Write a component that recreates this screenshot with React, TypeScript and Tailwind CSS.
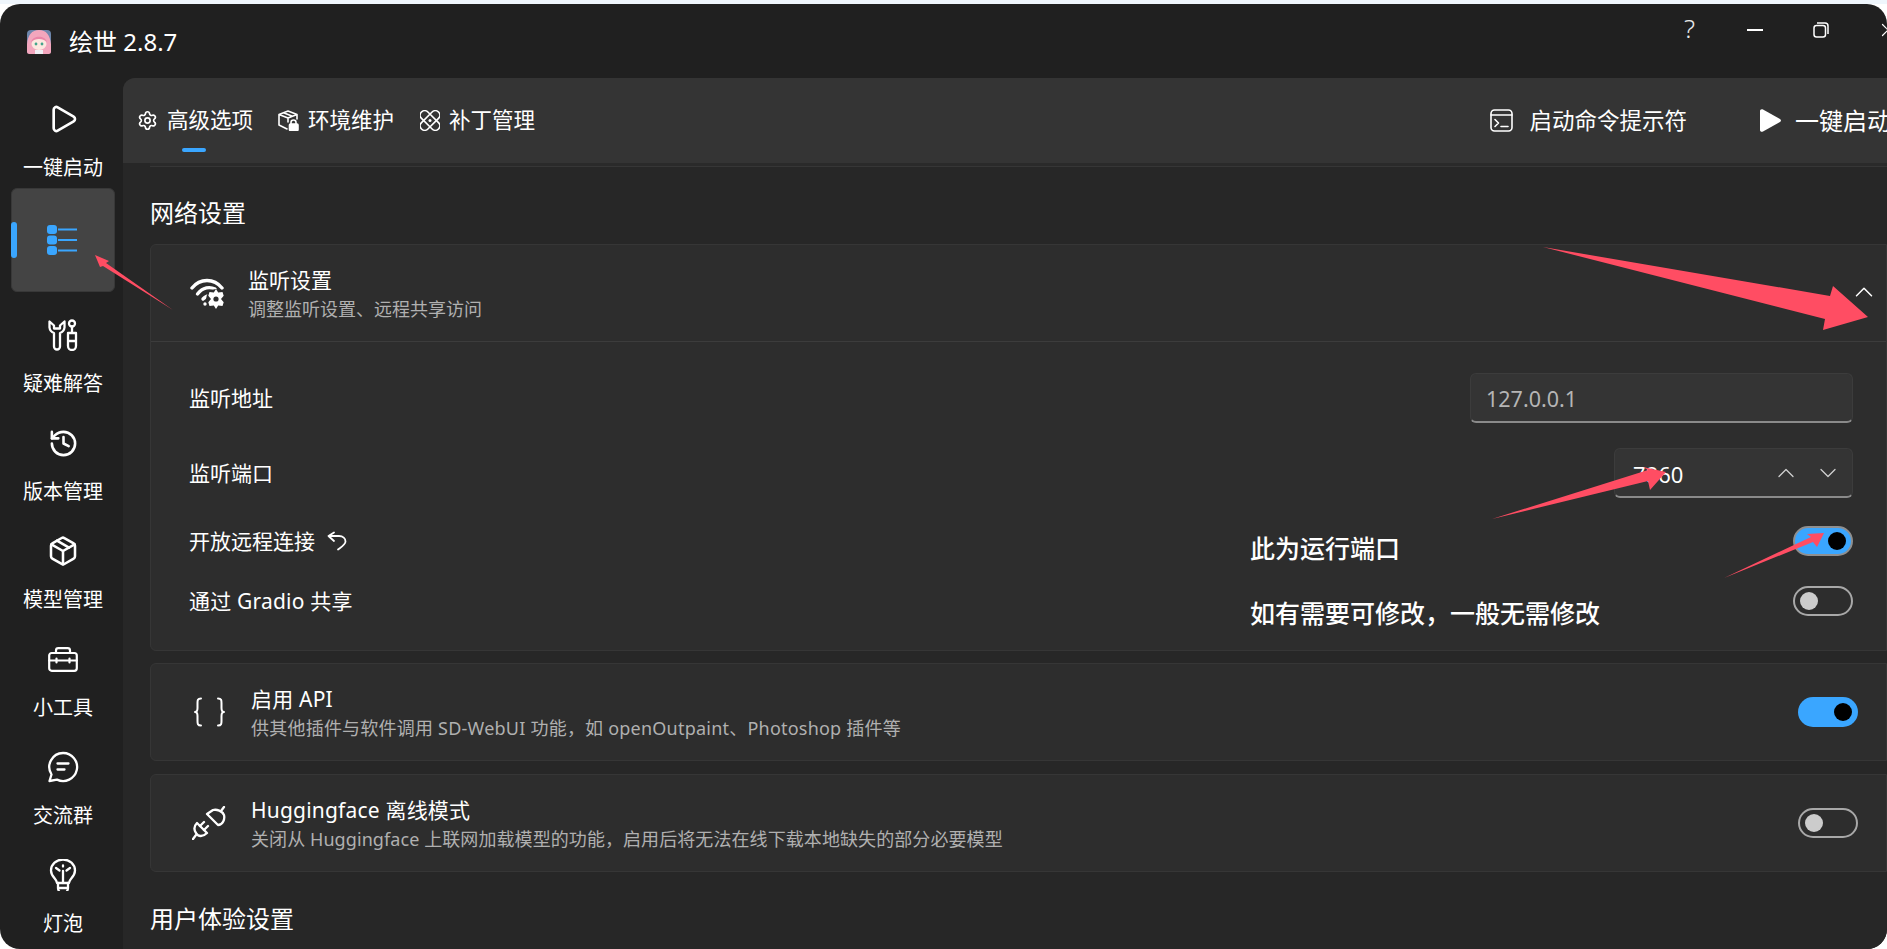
import React from "react";
import { Play, History, Package, Settings, ChevronUp, ChevronDown, X } from "lucide-react";

const Wrench = () => (
  <svg width="30" height="32" viewBox="0 0 30 32" fill="none" stroke="white" strokeWidth="2.3" strokeLinejoin="round" strokeLinecap="round">
    <path d="M1.500 2.500 v6 a6.500 6.500 0 0 0 4.500 5.500 v13.500 a3 3 0 0 0 6 0 V14 a6.500 6.500 0 0 0 4.500 -5.500 v-6 l-4.500 4 v3 h-6 v-3 z" />
    <circle cx="24" cy="4.500" r="3" />
    <path d="M24 7.500 V14 M20 14 h8 v13 a4 4 0 0 1 -8 0 z M20 22 h8" />
  </svg>
);

const ListIcon = () => (
  <svg width="30" height="30" viewBox="0 0 30 30" fill="#3aa6ff">
    <rect x="0" y="0" width="10" height="9" rx="3" />
    <rect x="0" y="10.500" width="10" height="9" rx="3" />
    <rect x="0" y="21" width="10" height="9" rx="3" />
    <rect x="11" y="3.500" width="19" height="2" />
    <rect x="11" y="14" width="19" height="2" />
    <rect x="11" y="24.500" width="19" height="2" />
  </svg>
);

const Bulb = () => (
  <svg width="30" height="32" viewBox="0 0 30 32" fill="none" stroke="white" strokeWidth="2.3" strokeLinejoin="round" strokeLinecap="round">
    <path d="M9 24 c0 -4 -6 -6 -6 -12.500 a12 11 0 0 1 24 0 c0 6.500 -6 8.500 -6 12.500 z" />
    <path d="M10 29 a5 5 0 0 0 10 0 z M10 24 v5 M20 24 v5" />
    <path d="M15 24 V12 M15 6.500 v1 M8 9 l3.500 2.500 M22 9 l-3.500 2.500" />
  </svg>
);

const ChatIcon = () => (
  <svg width="32" height="32" viewBox="0 0 32 32" fill="none" stroke="white" strokeWidth="2.3" strokeLinejoin="round" strokeLinecap="round">
    <path d="M16 2 a14 14 0 1 1 -6 26.600 L2.500 30 L4.500 23.500 A14 14 0 0 1 16 2 z" />
    <path d="M10.500 12.500 h11 M10.500 18.500 h7" />
  </svg>
);

const Toolbox = () => (
  <svg width="30" height="25" viewBox="0 0 30 25" fill="none" stroke="white" strokeWidth="2.200" strokeLinejoin="round" strokeLinecap="round">
    <rect x="1.200" y="6" width="27.600" height="17.800" rx="2.500" />
    <path d="M8 6 V3.500 a2.300 2.300 0 0 1 2.300 -2.300 h9.400 a2.300 2.300 0 0 1 2.300 2.300 V6" />
    <path d="M1.200 13.500 H28.800 M8.500 11.500 v4 M21.500 11.500 v4" />
  </svg>
);

const BoxLock = () => (
  <svg width="21" height="21" viewBox="0 0 21 21" fill="none" stroke="white" strokeWidth="1.6" strokeLinejoin="round" strokeLinecap="round">
    <path d="M10 1 L1 4.500 V15 L9 19 M10 1 L19 4.500 V9 M1 4.500 L10 8 L19 4.500 M10 8 V12 M5.500 2.800 L14.500 6.200" />
    <path d="M13 14 v-1.500 a2.500 2.500 0 0 1 5 0 V14" />
    <rect x="11.500" y="14" width="8.500" height="6.500" rx="1" fill="white" />
  </svg>
);

const Patch = () => (
  <svg width="20" height="21" viewBox="0 0 20 20" fill="none" stroke="white" strokeWidth="1.6">
    <rect x="5.500" y="-2" width="9" height="24" rx="4.500" transform="rotate(45 10 10)" />
    <rect x="5.500" y="-2" width="9" height="24" rx="4.500" transform="rotate(-45 10 10)" />
    <circle cx="10" cy="10" r="1.500" fill="white" stroke="none" />
  </svg>
);

const WifiGear = () => (
  <svg width="36" height="32" viewBox="0 0 36 32" fill="none" stroke="white" strokeWidth="3.400" strokeLinecap="round">
    <path d="M2 11 C10 1 24 1 32 11" />
    <path d="M7.500 17 C13 10 20 9.500 25 12" />
    <path d="M13 22 C15 20 16 19 18 19" />
    <circle cx="15" cy="27" r="1.700" fill="white" stroke="none" />
    <circle cx="26" cy="22" r="10" fill="#2d2d2d" stroke="none" />
    <path d="M26 12 l2.200 3.500 4.300 -.5 1.200 3.800 -2.700 3.200 2.700 3.200 -1.200 3.800 -4.300 -.5 -2.200 3.500 -2.200 -3.500 -4.300 .5 -1.200 -3.800 2.700 -3.200 -2.700 -3.200 1.200 -3.800 4.300 .5 z" fill="white" stroke="none" />
    <circle cx="26" cy="22" r="2.600" fill="#2d2d2d" stroke="none" />
  </svg>
);

const PlugIcon = () => (
  <svg width="34" height="34" viewBox="0 0 34 34" fill="none" stroke="white" strokeWidth="2.300" strokeLinecap="round" strokeLinejoin="round">
    <path d="M5 17 L15 27 C11 31 6 31 4 27 C2 24 2 20 5 17 z" />
    <path d="M4 29 L1 33 M8 20 L12 16 M12 24 L16 20" />
    <path d="M15 8 L26 19 C31 19 33 13 32 9 C30 5 25 3 21 4 z" />
    <path d="M29 5 L32 1" />
  </svg>
);

const BracesIcon = () => (
  <svg width="31" height="30" viewBox="0 0 31 30" fill="none" stroke="white" strokeWidth="2" strokeLinecap="round" strokeLinejoin="round">
    <path d="M7 1.500 C3.500 1.500 3.500 3.500 3.500 6 V11 C3.500 13 2.500 15 1 15 C2.500 15 3.500 17 3.500 19 V24 C3.500 26.500 3.500 28.500 7 28.500" />
    <path d="M24 1.500 C27.500 1.500 27.500 3.500 27.500 6 V11 C27.500 13 28.500 15 30 15 C28.500 15 27.500 17 27.500 19 V24 C27.500 26.500 27.500 28.500 24 28.500" />
  </svg>
);

const ReturnIcon = () => (
  <svg width="20" height="20" viewBox="0 0 20 20" fill="none" stroke="white" strokeWidth="1.800" strokeLinecap="round" strokeLinejoin="round">
    <path d="M7 1.500 L1.500 5 L7 10 M1.500 5 H12 C16 5 18.500 7.500 18.500 10.500 C18.500 13.500 15 15.500 11 18.500" />
  </svg>
);

const Toggle = ({ on, ring }: { on?: boolean; ring?: boolean }) =>
  on ? (
    <div className={`flex h-[30px] w-[60px] items-center justify-end rounded-full bg-[#3aa6ff] ${ring ? "border-2 border-[#8f8f8f] pr-[5px]" : "pr-[6px]"}`}>
      <div className="h-[18px] w-[18px] rounded-full bg-black" />
    </div>
  ) : (
    <div className="flex h-[30px] w-[60px] items-center rounded-full border-2 border-[#a8a8a8] pl-[5px]">
      <div className="h-[18px] w-[18px] rounded-full bg-[#cccccc]" />
    </div>
  );

const NavItem = ({ icon, label }: { icon: React.ReactNode; label: string }) => (
  <div className="flex h-[104px] w-[104px] flex-col items-center pt-[23px]">
    <div className="flex h-[32px] items-center justify-center">{icon}</div>
    <div className="mt-[19px] text-[20px] leading-[28px] text-white">{label}</div>
  </div>
);

const Tab = ({ icon, label, active }: { icon: React.ReactNode; label: string; active?: boolean }) => (
  <div className="relative flex h-full w-[117px] items-center gap-[9px]">
    <div className="flex w-[21px] justify-center">{icon}</div>
    <div className="mb-[2px] text-[21.500px] leading-[28px] text-white">{label}</div>
    {active && <div className="absolute bottom-[11px] left-[45px] h-[4px] w-[24px] rounded-full bg-[#3aa6ff]" />}
  </div>
);

const SettingCard = ({ icon, title, sub, subClass, on }: { icon: React.ReactNode; title: string; sub: string; subClass: string; on?: boolean }) => (
  <div className="flex h-[98px] items-center rounded-l-[6px] border border-[#363636] bg-[#2d2d2d] pr-[28px]">
    <div className="flex w-[100px] justify-center pl-[16px]">{icon}</div>
    <div className="flex-1">
      <div className="text-[21px] leading-[28px] tracking-[0.2px] text-white">{title}</div>
      <div className={`mt-[3px] text-[18px] leading-[24px] text-[#b0b0b0] ${subClass}`}>{sub}</div>
    </div>
    <Toggle on={on} />
  </div>
);

export default function App() {
  return (
    <div className="relative h-[949px] w-[1887px] overflow-hidden bg-white font-['Noto_Sans','Noto_Sans_CJK_SC',sans-serif]">
      <div className="h-[4px] bg-[#eff6fc]" />
      <div className="flex h-[945px] flex-col overflow-hidden rounded-[20px] bg-[#202020]">
        <div className="flex h-[74px] items-start">
          <div className="mt-[22px] flex items-start">
            <svg className="ml-[27px] mt-[4px]" width="24" height="24" viewBox="0 0 24 24">
              <rect width="24" height="24" rx="4" fill="#6d86ab" />
              <path d="M0 22 C-1 8 3 0 12 0 C21 0 25 8 24 22 C24 24 22 24 20 24 H4 C2 24 0 24 0 22 Z" fill="#f2a6bd" />
              <ellipse cx="12" cy="14" rx="7.500" ry="6" fill="#fde6df" />
              <path d="M4 12 C6 5 18 5 20 12 C16 8 8 8 4 12 Z" fill="#ea86a8" />
              <circle cx="9" cy="14" r="1.400" fill="#44a58c" />
              <circle cx="15" cy="14" r="1.400" fill="#44a58c" />
              <rect x="8" y="20" width="8" height="4" fill="#f0f0f5" />
            </svg>
            <div className="ml-[18px] text-[24px] leading-[32px] text-white">绘世 2.8.7</div>
          </div>
          <div className="ml-auto mt-[6px] flex items-center">
            <div className="mb-[4px] text-[26px] font-light leading-[36px] text-[#e8e8e8]">?</div>
            <div className="ml-[52px] h-[2px] w-[16px] bg-white" />
            <svg className="ml-[50px]" width="16" height="16" viewBox="0 0 16 16" fill="none" stroke="white" strokeWidth="1.500">
              <rect x="1" y="3.500" width="11.500" height="11.500" rx="2.500" />
              <path d="M4 1 H12 a3 3 0 0 1 3 3 V12" />
            </svg>
            <X className="ml-[48px] mr-[-12px]" size={22} strokeWidth={1.3} color="white" />
          </div>
        </div>
        <div className="flex min-h-0 flex-1">
          <div className="flex w-[123px] shrink-0 flex-col gap-[4px] pl-[11px] pt-[2px]">
            <NavItem icon={<Play size={32} strokeWidth={2} color="white" />} label="一键启动" />
            <div className="relative flex h-[104px] w-[104px] items-center justify-center rounded-[6px] border border-[#383838] bg-[#444444] pr-[2px]">
              <div className="absolute left-[-1px] top-[33px] h-[36px] w-[6px] rounded-full bg-[#3aa6ff]" />
              <ListIcon />
            </div>
            <NavItem icon={<Wrench />} label="疑难解答" />
            <NavItem icon={<History size={31} strokeWidth={2} color="white" />} label="版本管理" />
            <NavItem icon={<Package size={32} strokeWidth={1.9} color="white" />} label="模型管理" />
            <NavItem icon={<Toolbox />} label="小工具" />
            <NavItem icon={<ChatIcon />} label="交流群" />
            <NavItem icon={<Bulb />} label="灯泡" />
          </div>
          <div className="min-w-0 flex-1 overflow-hidden rounded-tl-[12px] bg-[#272727]">
            <div className="flex h-[85px] items-center bg-[#343434] pl-[14px]">
              <Tab active icon={<Settings size={23} strokeWidth={1.9} color="white" />} label="高级选项" />
              <div className="w-[24px]" />
              <Tab icon={<BoxLock />} label="环境维护" />
              <div className="w-[24px]" />
              <Tab icon={<Patch />} label="补丁管理" />
              <div className="ml-auto flex items-center">
                <svg width="23" height="23" viewBox="0 0 23 23" fill="none" stroke="white" strokeWidth="1.600" strokeLinecap="round" strokeLinejoin="round">
                  <rect x="1" y="1" width="21" height="21" rx="3.500" />
                  <path d="M1 6 H22 M5 10.500 L8.500 14 L5 17.500 M11 17.500 H18" />
                </svg>
                <div className="ml-[16px] text-[22.500px] leading-[30px] text-white">启动命令提示符</div>
                <svg className="ml-[73px]" width="21" height="23" viewBox="0 0 21 23" fill="white">
                  <path d="M0 2 C0 .5 1.500 -.3 3 .5 L20 10 C21.300 10.800 21.300 12.200 20 13 L3 22.500 C1.500 23.300 0 22.500 0 21 Z" />
                </svg>
                <div className="ml-[14px] mr-[-4px] text-[24px] leading-[30px] text-white">一键启动</div>
              </div>
            </div>
            <div className="ml-[27px] h-[4px] border-b border-[#363636] bg-[#2a2a2a]" />
            <div className="pl-[27px]">
              <div className="mt-[31px] text-[24px] leading-[30px] text-white">网络设置</div>
              <div className="mt-[16px] h-[407px] rounded-l-[6px] border border-[#363636] bg-[#2d2d2d]">
                <div className="flex h-[97px] items-center border-b border-[#3c3c3c] pr-[7px]">
                  <div className="ml-[39px] flex w-[36px] justify-center"><WifiGear /></div>
                  <div className="ml-[22px] flex-1">
                    <div className="text-[21px] leading-[28px] text-white">监听设置</div>
                    <div className="mt-[3px] text-[18px] leading-[24px] text-[#b0b0b0]">调整监听设置、远程共享访问</div>
                  </div>
                  <ChevronUp size={30} strokeWidth={1.2} color="white" className="mb-[2px]" />
                </div>
                <div className="pl-[38px] pr-[33px] pt-[31px]">
                  <div className="flex h-[50px] items-center justify-between">
                    <div className="text-[21px] leading-[28px] text-white">监听地址</div>
                    <div className="flex h-[50px] w-[383px] items-center rounded-[6px] border border-[#3c3c3c] border-b-2 border-b-[#8a8a8a] bg-[#343434] pl-[15px] pt-[4px] text-[21.500px] text-[#b5b5b5]">127.0.0.1</div>
                  </div>
                  <div className="mt-[25px] flex h-[50px] items-center justify-between">
                    <div className="text-[21px] leading-[28px] text-white">监听端口</div>
                    <div className="flex h-[50px] w-[239px] items-center rounded-[6px] border border-[#3c3c3c] border-b-2 border-b-[#8a8a8a] bg-[#343434] pl-[18px] text-[22px] text-white">
                      <span className="pt-[3px]">7860</span>
                      <ChevronUp className="ml-auto" size={28} strokeWidth={1.1} color="#cfcfcf" />
                      <ChevronDown className="ml-[14px] mr-[10px]" size={28} strokeWidth={1.1} color="#cfcfcf" />
                    </div>
                  </div>
                  <div className="mt-[28px] flex h-[30px] items-center justify-between">
                    <div className="flex items-center gap-[12px] text-[21px] leading-[28px] text-white">
                      开放远程连接
                      <ReturnIcon />
                    </div>
                    <Toggle on ring />
                  </div>
                  <div className="mt-[30px] flex h-[30px] items-center justify-between">
                    <div className="text-[21px] leading-[28px] tracking-[0.2px] text-white">通过 Gradio 共享</div>
                    <Toggle />
                  </div>
                </div>
              </div>
              <div className="mt-[12px]">
                <SettingCard on icon={<BracesIcon />} title="启用 API" sub="供其他插件与软件调用 SD-WebUI 功能，如 openOutpaint、Photoshop 插件等" subClass="tracking-[0.22px]" />
              </div>
              <div className="mt-[13px]">
                <SettingCard icon={<PlugIcon />} title="Huggingface 离线模式" sub="关闭从 Huggingface 上联网加载模型的功能，启用后将无法在线下载本地缺失的部分必要模型" subClass="tracking-[0.08px]" />
              </div>
              <div className="mt-[32px] text-[24px] leading-[30px] text-white">用户体验设置</div>
            </div>
          </div>
        </div>
      </div>

      <div className="absolute left-[1250px] top-[532px] text-[25px] font-medium leading-[32px] text-white">此为运行端口</div>
      <div className="absolute left-[1250px] top-[597px] text-[25px] font-medium leading-[32px] text-white">如有需要可修改，一般无需修改</div>

      <svg className="pointer-events-none absolute left-0 top-0" width="1887" height="949" fill="#ff4d63">
        <polygon points="95,255 109,261 106,263 173,310 103,266 100,267" />
        <polygon points="1543,247 1830,296 1833,286 1868,317 1823,330 1825,319" />
        <polygon points="1492,519 1648,470 1643,467 1666,472 1650,490 1648,481" />
        <polygon points="1724,578 1811,537 1807,534 1824,533 1817,547 1813,542" />
      </svg>
    </div>
  );
}
